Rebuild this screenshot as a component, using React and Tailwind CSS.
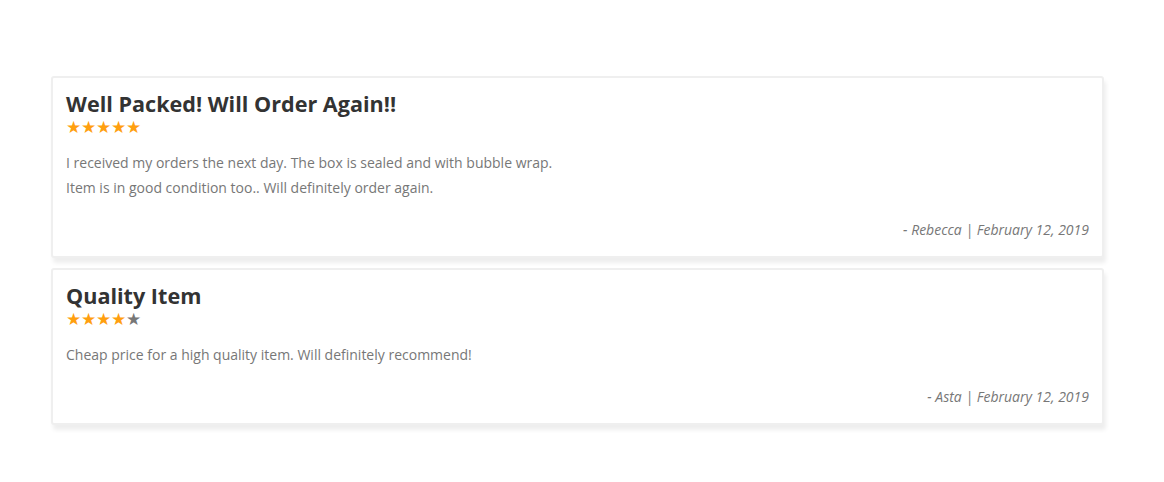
const REVIEWS = [
  {
    title: 'Well Packed! Will Order Again!!',
    rating: 5,
    lines: [
      'I received my orders the next day. The box is sealed and with bubble wrap.',
      'Item is in good condition too.. Will definitely order again.',
    ],
    author: 'Rebecca',
    date: 'February 12, 2019',
  },
  {
    title: 'Quality Item',
    rating: 4,
    lines: ['Cheap price for a high quality item. Will definitely recommend!'],
    author: 'Asta',
    date: 'February 12, 2019',
  },
];

function Stars({ rating }) {
  return (
    <div className="text-[16.5px] leading-[18px] h-[18px] whitespace-nowrap">
      <span className="text-[#ff9f0f]">{'★'.repeat(rating)}</span>
      <span className="text-[#777]">{'★'.repeat(5 - rating)}</span>
    </div>
  );
}

function ReviewCard({ review }) {
  return (
    <div className="bg-white border-2 border-[#efefef] rounded-[3px] px-[13px] pt-[11px] pb-[16px] shadow-[2px_5px_4px_rgba(0,0,0,0.07)]">
      <h3 className="text-[21.6px] leading-[29px] font-bold text-[#333]">{review.title}</h3>
      <Stars rating={review.rating} />
      <div className="mt-[14px] text-[14px] leading-[25px] text-[#777]">
        {review.lines.map((l) => (
          <p key={l}>{l}</p>
        ))}
      </div>
      <p className="mt-[20px] text-right text-[14px] leading-[20px] italic text-[#777]">
        - {review.author} | {review.date}
      </p>
    </div>
  );
}

export default function App() {
  return (
    <div className="min-h-screen bg-white font-['Open_Sans',sans-serif] pt-[76px] pl-[51px] pr-[60px]">
      <div className="w-[1053px] flex flex-col gap-[10px]">
        {REVIEWS.map((r) => (
          <ReviewCard key={r.title} review={r} />
        ))}
      </div>
    </div>
  );
}
